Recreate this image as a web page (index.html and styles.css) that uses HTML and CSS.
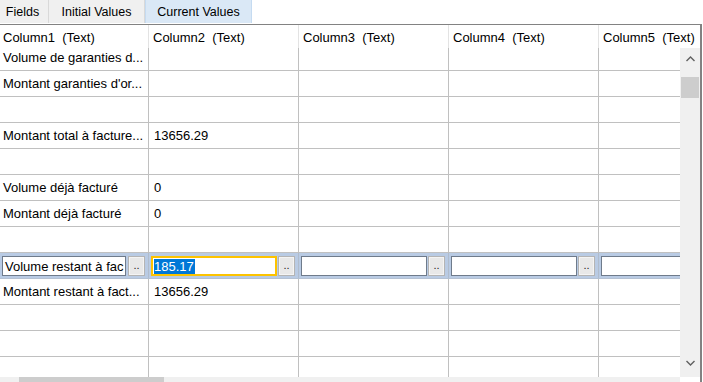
FILE: index.html
```html
<!DOCTYPE html>
<html>
<head>
<meta charset="utf-8">
<link rel="stylesheet" href="styles.css">
</head>
<body>
<div class="tabs">
  <div class="tab t1">Fields</div>
  <div class="tab t2">Initial Values</div>
  <div class="tab t3 active">Current Values</div>
</div>
<div class="frame">
  <div class="header">
    <div class="hc c1">Column1  (Text)</div>
    <div class="hc cn">Column2  (Text)</div>
    <div class="hc cn">Column3  (Text)</div>
    <div class="hc cn">Column4  (Text)</div>
    <div class="hc cn">Column5  (Text)</div>
  </div>
  <div class="body">
    <div class="rows">
      <div class="row first"><div class="cell c1">Volume de garanties d...</div><div class="cell cn"></div><div class="cell cn"></div><div class="cell cn"></div><div class="cell cn"></div></div>
      <div class="row"><div class="cell c1">Montant garanties d'or...</div><div class="cell cn"></div><div class="cell cn"></div><div class="cell cn"></div><div class="cell cn"></div></div>
      <div class="row"><div class="cell c1"></div><div class="cell cn"></div><div class="cell cn"></div><div class="cell cn"></div><div class="cell cn"></div></div>
      <div class="row"><div class="cell c1">Montant total à facture...</div><div class="cell cn">13656.29</div><div class="cell cn"></div><div class="cell cn"></div><div class="cell cn"></div></div>
      <div class="row"><div class="cell c1"></div><div class="cell cn"></div><div class="cell cn"></div><div class="cell cn"></div><div class="cell cn"></div></div>
      <div class="row"><div class="cell c1">Volume déjà facturé</div><div class="cell cn">0</div><div class="cell cn"></div><div class="cell cn"></div><div class="cell cn"></div></div>
      <div class="row"><div class="cell c1">Montant déjà facturé</div><div class="cell cn">0</div><div class="cell cn"></div><div class="cell cn"></div><div class="cell cn"></div></div>
      <div class="row"><div class="cell c1"></div><div class="cell cn"></div><div class="cell cn"></div><div class="cell cn"></div><div class="cell cn"></div></div>
      <div class="row edit">
        <div class="ecell e1"><div class="tb tb1">Volume restant à fac</div><div class="btn">..</div></div>
        <div class="ecell en"><div class="tb focus"><span class="sel">185.17</span></div><div class="btn">..</div></div>
        <div class="ecell en"><div class="tb"></div><div class="btn">..</div></div>
        <div class="ecell en"><div class="tb"></div><div class="btn">..</div></div>
        <div class="ecell en"><div class="tb"></div></div>
      </div>
      <div class="row"><div class="cell c1">Montant restant à fact...</div><div class="cell cn">13656.29</div><div class="cell cn"></div><div class="cell cn"></div><div class="cell cn"></div></div>
      <div class="row"><div class="cell c1"></div><div class="cell cn"></div><div class="cell cn"></div><div class="cell cn"></div><div class="cell cn"></div></div>
      <div class="row"><div class="cell c1"></div><div class="cell cn"></div><div class="cell cn"></div><div class="cell cn"></div><div class="cell cn"></div></div>
      <div class="row"><div class="cell c1"></div><div class="cell cn"></div><div class="cell cn"></div><div class="cell cn"></div><div class="cell cn"></div></div>
    </div>
    <div class="vscroll">
      <div class="arrow up"><svg width="9" height="6" viewBox="0 0 9 6"><path d="M0.5 5 L4.5 1 L8.5 5" fill="none" stroke="#606060" stroke-width="1.4"/></svg></div>
      <div class="vthumb"></div>
      <div class="vspace"></div>
      <div class="arrow down"><svg width="9" height="6" viewBox="0 0 9 6"><path d="M0.5 1 L4.5 5 L8.5 1" fill="none" stroke="#606060" stroke-width="1.4"/></svg></div>
    </div>
  </div>
  <div class="bottom">
    <div class="hscroll"><div class="hthumb"></div></div>
    <div class="corner"></div>
  </div>
</div>
</body>
</html>
```
FILE: styles.css
```css
* { box-sizing: border-box; }
html, body {
  margin: 0;
  padding: 0;
  width: 703px;
  height: 382px;
  overflow: hidden;
  background: #ffffff;
  font-family: "Liberation Sans", Arial, sans-serif;
  font-size: 13px;
  color: #000;
}
.tabs {
  display: flex;
  height: 24px;
  background: #ffffff;
}
.tab {
  height: 23px;
  display: flex;
  align-items: center;
  justify-content: center;
  background: #f0f0f0;
  border-right: 1px solid #d9d9d9;
  font-size: 12.5px;
  white-space: nowrap;
}
.t1 { width: 49px; padding-right: 3px; }
.t2 { width: 96px; }
.t3 { width: 107px; }
.tab.active {
  background: #dae8f6;
  border: 1px solid #c5dbf1;
  border-top: none;
  border-bottom: none;
  height: 23px;
}
.frame {
  border-top: 1px solid #828282;
  border-right: 2px solid #828282;
  width: 702px;
}
.header {
  display: flex;
  height: 23px;
  overflow: hidden;
  white-space: pre;
}
.hc {
  flex: none;
  display: flex;
  align-items: center;
  padding-top: 1px;
}
.hc.c1 { width: 148px; padding-left: 3px; }
.hc.cn { width: 150px; padding-left: 4px; border-left: 1px solid #e3e3e3; }
.body {
  display: flex;
  height: 329px;
}
.rows {
  width: 680px;
  height: 329px;
  overflow: hidden;
  flex: none;
}
.row {
  display: flex;
  width: 748px;
  height: 26px;
  border-bottom: 1px solid #c0c0c0;
  white-space: nowrap;
}
.row.first { height: 23px; }
.row.first .cell { padding-bottom: 3px; }
.cell {
  flex: none;
  display: flex;
  align-items: center;
  overflow: hidden;
}
.cell.c1 { width: 148px; padding-left: 3px; }
.cell.cn { width: 150px; padding-left: 5px; border-left: 1px solid #c0c0c0; }
.row.edit {
  background: #b9cbe4;
  border-bottom-color: #b4c1d3;
}
.ecell {
  flex: none;
  display: flex;
  align-items: flex-start;
  padding-top: 3px;
}
.e1 { width: 148px; padding-left: 2px; }
.en { width: 150px; padding-left: 2px; border-left: 1px solid #b0bccc; }
.tb {
  width: 126px;
  height: 20px;
  border: 1px solid #6f7b8b;
  background: #ffffff;
  padding-left: 3px;
  display: flex;
  align-items: center;
  overflow: hidden;
  white-space: nowrap;
}
.tb1 { width: 124px; padding-left: 2px; margin-right: 1px; }
.tb.focus {
  border: 2px solid #fdc300;
  padding-left: 1px;
}
.sel {
  background: #0078d7;
  color: #ffffff;
  line-height: 15px;
  padding: 0 1px 0 0;
}
.btn {
  width: 17px;
  height: 20px;
  margin-left: 1px;
  border: 1px solid #b4b4b4;
  background: #e8e8e8;
  box-shadow: inset 0 0 0 1px #f4f4f4;
  font-size: 11px;
  line-height: 11px;
  display: flex;
  justify-content: center;
  align-items: flex-end;
  padding-bottom: 4px;
  color: #222;
}
.vscroll {
  width: 20px;
  height: 329px;
  background: #f0f0f0;
  display: flex;
  flex-direction: column;
  flex: none;
}
.arrow {
  display: flex;
  justify-content: center;
  align-items: center;
  flex: none;
}
.arrow.up { height: 23px; padding-bottom: 1px; }
.arrow.down { height: 17px; margin-bottom: 6px; }
.vthumb {
  height: 21px;
  margin: 6px 1px 0 1px;
  background: #cdcdcd;
  flex: none;
}
.vspace { flex: 1; }
.bottom {
  display: flex;
  height: 17px;
}
.hscroll {
  width: 680px;
  height: 17px;
  background: #f0f0f0;
}
.hthumb {
  width: 145px;
  height: 17px;
  margin-left: 19px;
  background: #cdcdcd;
}
.corner {
  width: 20px;
  background: #ffffff;
}
```
